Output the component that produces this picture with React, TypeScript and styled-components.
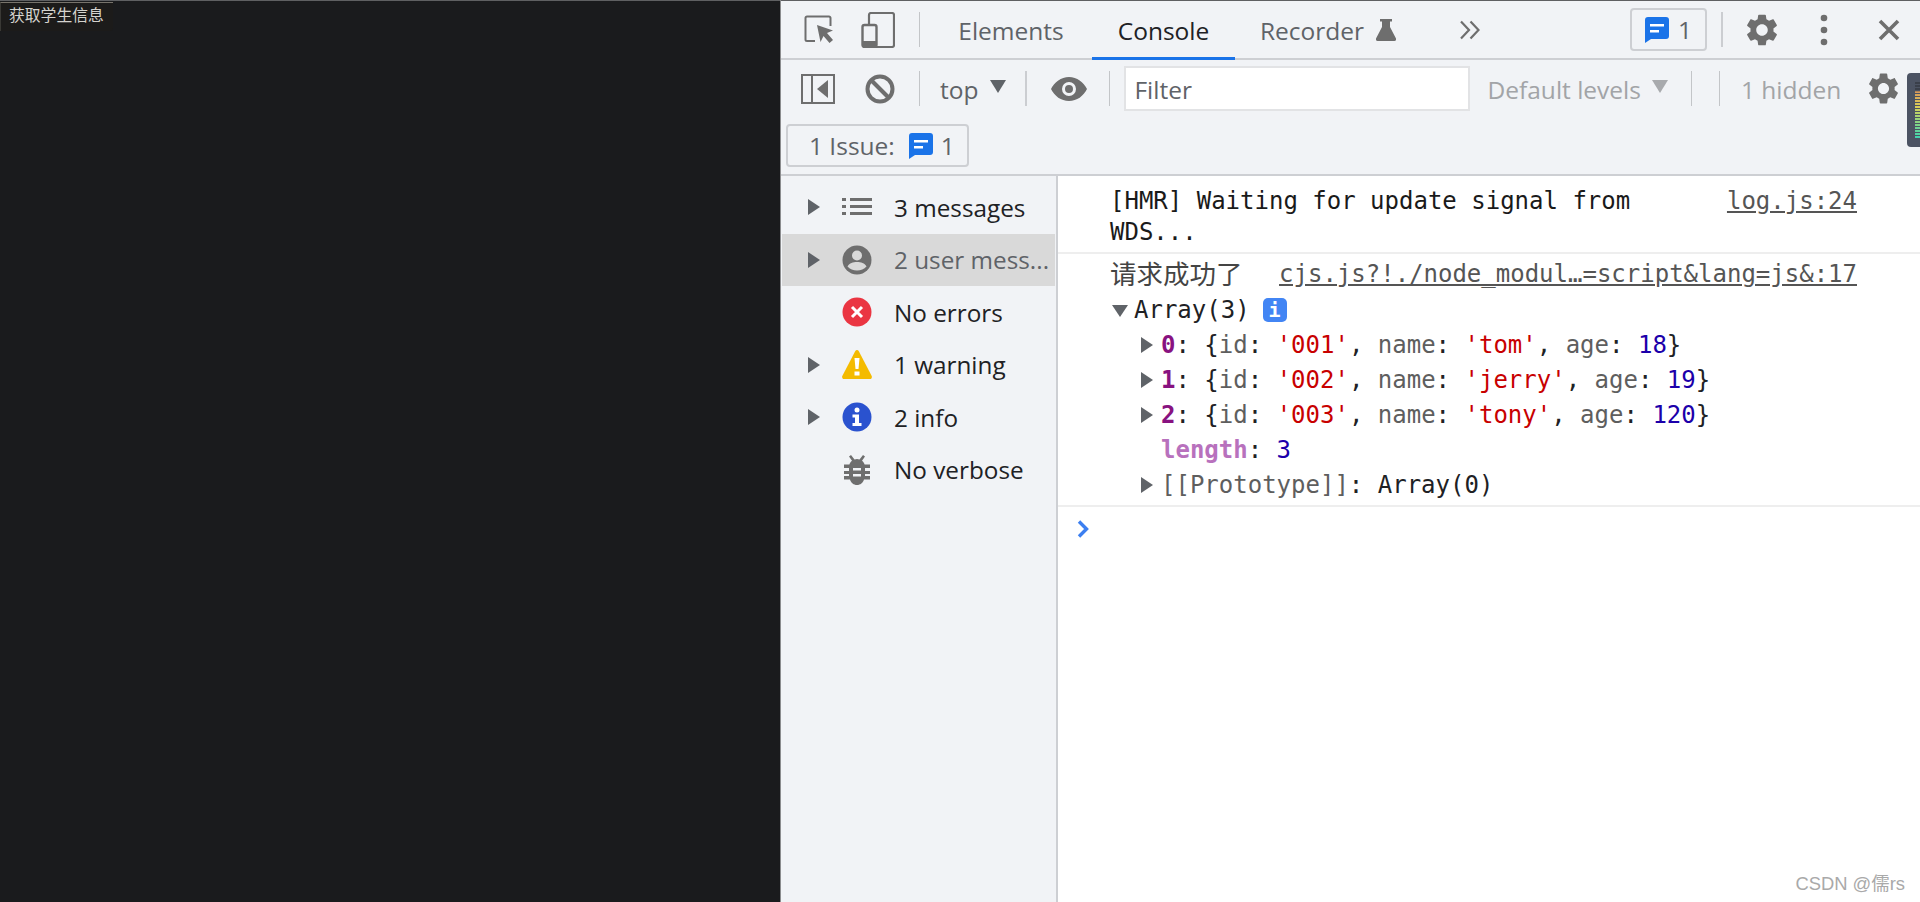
import React from 'react';
import styled, { createGlobalStyle } from 'styled-components';

const GlobalStyle = createGlobalStyle`
    html, body {
        margin: 0;
        padding: 0;
        background: #fff;
    }
    * {
        box-sizing: border-box;
    }
`;

const UI_FONT = `"Open Sans", "Noto Sans", sans-serif`;
const MONO_FONT = `"DejaVu Sans Mono", "Liberation Mono", "Noto Sans CJK SC", monospace`;

const Page = styled.div`
    position: relative;
    display: flex;
    width: 1920px;
    height: 902px;
    overflow: hidden;
`;

const AppPane = styled.div`
    width: 780px;
    flex-shrink: 0;
    background: #1a1b1d;
    border-top: 1px solid #5f6062;
`;

const FetchButton = styled.button`
    display: block;
    width: 113px;
    height: 29px;
    margin-top: 1px;
    padding: 0 0 6px 8px;
    border: none;
    border-top: 1px solid #77736b;
    border-left: 1px solid #3a3935;
    border-radius: 0 0 3px 0;
    background: #1c1b1a;
    color: #d5d3ce;
    font-family: "Noto Sans CJK SC", sans-serif;
    font-size: 15.8px;
    text-align: left;
`;

const DevTools = styled.div`
    flex: 1;
    display: flex;
    flex-direction: column;
    background: #f1f3f6;
    border-left: 1px solid #8b8c8e;
    font-family: ${UI_FONT};
`;

const TabBar = styled.div`
    display: flex;
    align-items: center;
    height: 60px;
    flex-shrink: 0;
    border-top: 1px solid #5f6062;
    border-bottom: 2px solid #cdcfd3;
`;

const Slot = styled.div<{ $x: number; $w: number }>`
    display: flex;
    align-items: center;
    justify-content: center;
    flex-shrink: 0;
    width: ${p => p.$w}px;
    margin-left: ${p => p.$x}px;
`;

const Divider = styled.div<{ $x: number; $light?: boolean }>`
    flex-shrink: 0;
    width: ${p => (p.$light ? 1 : 2)}px;
    height: 35px;
    margin-left: ${p => p.$x}px;
    background: ${p => (p.$light ? '#c3c5c8' : '#cbcdd1')};
`;

const Tab = styled.div<{ $x: number; $w: number; $active?: boolean }>`
    display: flex;
    align-items: center;
    justify-content: center;
    flex-shrink: 0;
    align-self: stretch;
    width: ${p => p.$w}px;
    margin-left: ${p => p.$x}px;
    margin-bottom: -2px;
    padding-top: 2px;
    border-bottom: 3px solid ${p => (p.$active ? '#1a73e8' : 'transparent')};
    color: ${p => (p.$active ? '#202124' : '#5f6368')};
    font-size: 24.5px;
    white-space: nowrap;
`;

const IssueCount = styled.div<{ $x: number }>`
    display: flex;
    align-items: center;
    justify-content: center;
    gap: 9px;
    flex-shrink: 0;
    width: 77px;
    height: 43px;
    margin-left: ${p => p.$x}px;
    border: 2px solid #cdcfd3;
    border-radius: 4px;
    color: #5f6368;
    font-size: 24.5px;
`;

const ConsoleBars = styled.div`
    position: relative;
    flex-shrink: 0;
    height: 116px;
    border-bottom: 2px solid #cdcfd3;
`;

const ToolRow = styled.div`
    display: flex;
    align-items: center;
    height: 54px;
    padding-top: 3px;
`;

const ContextLabel = styled.div<{ $x: number; $muted?: boolean }>`
    flex-shrink: 0;
    margin-left: ${p => p.$x}px;
    padding-top: 2px;
    color: ${p => (p.$muted ? '#a2a4a7' : '#5f6368')};
    font-size: 24.5px;
    white-space: nowrap;
`;

const Caret = styled.div<{ $x: number; $muted?: boolean }>`
    flex-shrink: 0;
    width: 0;
    height: 0;
    margin-left: ${p => p.$x}px;
    margin-bottom: 4px;
    border-left: 8px solid transparent;
    border-right: 8px solid transparent;
    border-top: 13px solid ${p => (p.$muted ? '#a8aaad' : '#5f6368')};
`;

const FilterBox = styled.div<{ $x: number }>`
    display: flex;
    align-items: center;
    flex-shrink: 0;
    width: 346px;
    height: 45px;
    margin-left: ${p => p.$x}px;
    padding: 2px 0 0 8px;
    background: #fff;
    border: 2px solid #e2e3e5;
    color: #5f6368;
    font-size: 24.5px;
`;

const LevelMeter = styled.div`
    position: absolute;
    top: 13px;
    left: 1126px;
    width: 20px;
    height: 74px;
    padding: 9px 0 0 8px;
    border-radius: 4px 0 0 4px;
    background: #4c5363;
`;

const MeterBars = styled.div`
    width: 5px;
    height: 56px;
    background:
        repeating-linear-gradient(to bottom, transparent 0 2px, #4c5363 2px 3px),
        linear-gradient(to bottom, #3a3f4a 0 14%, #d99a5a 18%, #d8cf57 45%, #8fd47f 70%, #3fd4b0 100%);
`;

const IssueRow = styled.div`
    padding: 10px 0 0 5px;
`;

const IssueButton = styled.div`
    display: flex;
    align-items: center;
    width: 183px;
    height: 43px;
    padding-left: 21px;
    border: 2px solid #cdcfd3;
    border-radius: 4px;
    color: #5f6368;
    font-size: 24.5px;
`;

const IssueCountText = styled.span`
    margin-left: 8px;
`;

const Body = styled.div`
    flex: 1;
    display: flex;
    min-height: 0;
`;

const Sidebar = styled.div`
    width: 277px;
    flex-shrink: 0;
    padding: 5px 0 0 1px;
    border-right: 2px solid #cdcfd3;
`;

const SideItem = styled.div<{ $selected?: boolean }>`
    display: flex;
    align-items: center;
    width: 273px;
    height: 52.5px;
    background: ${p => (p.$selected ? '#d9d9d9' : 'transparent')};
    color: ${p => (p.$selected ? '#5f6368' : '#202124')};
    font-size: 24.3px;
    white-space: nowrap;
`;

const SideArrow = styled.div<{ $hidden?: boolean }>`
    flex-shrink: 0;
    width: 0;
    height: 0;
    margin-left: 26px;
    border-top: 8px solid transparent;
    border-bottom: 8px solid transparent;
    border-left: 12px solid ${p => (p.$hidden ? 'transparent' : '#5f6368')};
`;

const SideIcon = styled.div`
    display: flex;
    flex-shrink: 0;
    width: 30px;
    margin-left: 22px;
    margin-right: 22px;
`;

const Main = styled.div`
    flex: 1;
    background: #fff;
    font-family: ${MONO_FONT};
    font-size: 24px;
    color: #202124;
`;

const LogLine = styled.div<{ $height: number }>`
    display: flex;
    justify-content: space-between;
    height: ${p => p.$height}px;
    padding: 10px 63px 0 52px;
    border-bottom: 2px solid #eeeeee;
`;

const LogText = styled.div<{ $width?: number; $muted?: boolean }>`
    width: ${p => (p.$width ? `${p.$width}px` : 'auto')};
    color: ${p => (p.$muted ? '#444' : '#1a1a1a')};
    line-height: 31px;
`;

const CjkText = styled.span`
    font-size: 26.5px;
`;

const SourceLink = styled.a`
    color: #555;
    text-decoration: underline;
    line-height: 31px;
    white-space: nowrap;
`;

const LogGroup = styled.div`
    height: 253px;
    padding: 5px 63px 0 52px;
    border-bottom: 2px solid #eeeeee;
`;

const GroupHeader = styled.div`
    display: flex;
    justify-content: space-between;
    height: 33px;
    line-height: 33px;
`;

const TreeRow = styled.div<{ $indent: number }>`
    display: flex;
    align-items: center;
    height: 35px;
    padding-left: ${p => p.$indent}px;
    white-space: pre;
`;

const DownArrow = styled.div`
    width: 0;
    height: 0;
    margin: 2px 6px 0 1px;
    border-left: 8px solid transparent;
    border-right: 8px solid transparent;
    border-top: 12px solid #5f6368;
`;

const RightArrow = styled.div`
    flex-shrink: 0;
    width: 0;
    height: 0;
    margin-right: 8px;
    border-top: 8px solid transparent;
    border-bottom: 8px solid transparent;
    border-left: 12px solid #5f6368;
`;

const InfoBadge = styled.span`
    display: flex;
    align-items: center;
    justify-content: center;
    width: 24px;
    height: 24px;
    margin-left: 13px;
    border-radius: 5px;
    background: #4285f4;
    color: #fff;
    font-size: 20px;
    font-weight: bold;
`;

const Key = styled.span<{ $light?: boolean }>`
    color: ${p => (p.$light ? '#b871bd' : '#881280')};
    font-weight: bold;
`;
const Str = styled.span`
    color: #c80000;
`;
const Num = styled.span`
    color: #1c00aa;
`;
const Dim = styled.span`
    color: #5e5e5e;
`;

const PromptRow = styled.div`
    padding: 9px 0 0 19px;
`;

const Watermark = styled.div`
    position: absolute;
    right: 15px;
    bottom: 7px;
    color: #a9a9a9;
    font-family: "Liberation Sans", "Noto Sans CJK SC", sans-serif;
    font-size: 18.4px;
`;

const GEAR =
    'M19.14 12.94c.04-.3.06-.61.06-.94 0-.32-.02-.64-.07-.94l2.03-1.58c.18-.14.23-.41.12-.61l-1.92-3.32c-.12-.22-.37-.29-.59-.22l-2.39.96c-.5-.38-1.03-.7-1.62-.94l-.36-2.54c-.04-.24-.24-.41-.48-.41h-3.84c-.24 0-.43.17-.47.41l-.36 2.54c-.59.24-1.13.57-1.62.94l-2.39-.96c-.22-.08-.47 0-.59.22L2.74 8.87c-.12.21-.08.47.12.61l2.03 1.58c-.05.3-.09.63-.09.94s.02.64.07.94l-2.03 1.58c-.18.14-.23.41-.12.61l1.92 3.32c.12.22.37.29.59.22l2.39-.96c.5.38 1.03.7 1.62.94l.36 2.54c.05.24.24.41.48.41h3.84c.24 0 .44-.17.47-.41l.36-2.54c.59-.24 1.13-.56 1.62-.94l2.39.96c.22.08.47 0 .59-.22l1.92-3.32c.12-.22.07-.47-.12-.61l-2.01-1.58zM12 15.6c-1.98 0-3.6-1.62-3.6-3.6s1.62-3.6 3.6-3.6 3.6 1.62 3.6 3.6-1.62 3.6-3.6 3.6z';

const ICON_GREY = '#6e6e6e';

const InspectIcon = () => (
    <svg width="30" height="30" viewBox="0 0 30 30">
        <path d="M11 26H3a1.5 1.5 0 0 1-1.5-1.5V3A1.5 1.5 0 0 1 3 1.500h22A1.500 1.500 0 0 1 26.500 3v8" fill="none" stroke={ICON_GREY} strokeWidth="2" />
        <path d="M13 10l16 5.500-6 2.500 6 7-3.500 3-6-7-3 6z" fill={ICON_GREY} />
    </svg>
);

const DeviceIcon = () => (
    <svg width="34" height="36" viewBox="0 0 34 36">
        <path d="M8 13V3a2 2 0 0 1 2-2h21a2 2 0 0 1 2 2v30a2 2 0 0 1-2 2H15" fill="none" stroke={ICON_GREY} strokeWidth="2.200" />
        <rect x="1.500" y="13" width="14" height="22" rx="2" fill="none" stroke={ICON_GREY} strokeWidth="2.400" />
        <rect x="1.500" y="29" width="14" height="6" fill={ICON_GREY} />
    </svg>
);

const FlaskIcon = () => (
    <svg width="20" height="22" viewBox="0 0 20 22">
        <path d="M4 0h12v2.500h-2V8l6 11.500A1.800 1.800 0 0 1 18.500 22h-17A1.800 1.800 0 0 1 0 19.500L6 8V2.500H4z" fill={ICON_GREY} />
    </svg>
);

const ChevronsIcon = () => (
    <svg width="20" height="20" viewBox="0 0 20 20">
        <path d="M1 1.500L9 10l-8 8.500M10.500 1.500L18.500 10l-8 8.500" fill="none" stroke={ICON_GREY} strokeWidth="2.200" />
    </svg>
);

const MessageIcon = () => (
    <svg width="24" height="26" viewBox="0 0 24 26">
        <path d="M3 0h18a3 3 0 0 1 3 3v16a3 3 0 0 1-3 3H6l-6 4V3a3 3 0 0 1 3-3z" fill="#1a73e8" />
        <rect x="5" y="7" width="14" height="2.500" fill="#fff" />
        <rect x="5" y="13" width="9" height="2.500" fill="#fff" />
    </svg>
);

const GearIcon = ({ size }: { size: number }) => (
    <svg width={size} height={size} viewBox="2 2 20 20">
        <path d={GEAR} fill={ICON_GREY} />
    </svg>
);

const DotsIcon = () => (
    <svg width="8" height="32" viewBox="0 0 8 32">
        <circle cx="4" cy="4" r="3.300" fill={ICON_GREY} />
        <circle cx="4" cy="16" r="3.300" fill={ICON_GREY} />
        <circle cx="4" cy="28" r="3.300" fill={ICON_GREY} />
    </svg>
);

const CloseIcon = () => (
    <svg width="22" height="22" viewBox="0 0 22 22">
        <path d="M2 2l18 18M20 2L2 20" stroke={ICON_GREY} strokeWidth="3.600" />
    </svg>
);

const PanelIcon = () => (
    <svg width="34" height="30" viewBox="0 0 34 30">
        <rect x="1" y="1" width="32" height="28" fill="none" stroke={ICON_GREY} strokeWidth="2" />
        <path d="M11 1v28" stroke={ICON_GREY} strokeWidth="2" />
        <path d="M27 6v18L16 15z" fill={ICON_GREY} />
    </svg>
);

const BlockIcon = () => (
    <svg width="30" height="30" viewBox="0 0 30 30">
        <circle cx="15" cy="15" r="12.500" fill="none" stroke={ICON_GREY} strokeWidth="4" />
        <path d="M6 6l18 18" stroke={ICON_GREY} strokeWidth="4" />
    </svg>
);

const EyeIcon = () => (
    <svg width="36" height="24" viewBox="0 0 36 24">
        <path d="M18 0C10 0 3.500 5 0 12c3.500 7 10 12 18 12s14.500-5 18-12C32.500 5 26 0 18 0zm0 19a7 7 0 1 1 0-14 7 7 0 0 1 0 14zm0-11a4 4 0 1 0 0 8 4 4 0 0 0 0-8z" fill={ICON_GREY} />
    </svg>
);

const ListIcon = () => (
    <svg width="30" height="18" viewBox="0 0 30 18">
        <path d="M0 0h4v3H0zM8 0h22v3H8zM0 7h4v3H0zM8 7h22v3H8zM0 14h4v3H0zM8 14h22v3H8z" fill={ICON_GREY} />
    </svg>
);

const UserIcon = () => (
    <svg width="30" height="30" viewBox="0 0 30 30">
        <circle cx="15" cy="15" r="14.500" fill={ICON_GREY} />
        <circle cx="15" cy="10.500" r="5" fill="#d9d9d9" />
        <path d="M5.500 21.500c2-3.500 5.500-4.500 9.500-4.500s7.500 1 9.500 4.500c-2.300 2.700-5.700 4-9.500 4s-7.200-1.300-9.500-4z" fill="#d9d9d9" />
    </svg>
);

const ErrorIcon = () => (
    <svg width="30" height="30" viewBox="0 0 30 30">
        <circle cx="15" cy="15" r="14.500" fill="#ea3542" />
        <path d="M10 10l10 10M20 10L10 20" stroke="#fff" strokeWidth="3" />
    </svg>
);

const WarningIcon = () => (
    <svg width="30" height="30" viewBox="0 0 30 30">
        <path d="M15 0c.8 0 1.300.4 1.700 1.100L29.700 26c.6 1.300-.2 3-1.700 3H2c-1.500 0-2.300-1.700-1.700-3L13.300 1.100C13.700.4 14.200 0 15 0z" fill="#f4bb00" />
        <path d="M12.500 8h5l-1 11h-3z" fill="#fff" />
        <rect x="12.500" y="21.500" width="5" height="4" fill="#fff" />
    </svg>
);

const InfoIcon = () => (
    <svg width="30" height="30" viewBox="0 0 30 30">
        <circle cx="15" cy="15" r="14.500" fill="#2a52cf" />
        <circle cx="15" cy="8" r="2.500" fill="#fff" />
        <path d="M10.500 12.500H17V21h2.500v3h-9v-3H13v-5.500h-2.500z" fill="#fff" />
    </svg>
);

const BugIcon = () => (
    <svg width="30" height="30" viewBox="0 0 30 30">
        <path d="M9 0l3.500 4.500C13.500 4.200 14.200 4 15 4s1.500.2 2.500.5L21 0l2 1.500-3 4.200c1.300 1 2.200 2.300 2.600 3.800h5.400v3.500h-5v3h5V19h-5v2h5v3.500h-6C21 27.800 18.300 30 15 30s-6-2.200-7-5.500H2V21h5v-2H2v-3h5v-3H2V9.500h5.400C7.800 8 8.700 6.700 10 5.700L7 1.500z" fill={ICON_GREY} />
        <rect x="11" y="13" width="8" height="2.500" fill="#f1f3f6" />
        <rect x="11" y="19" width="8" height="2.500" fill="#f1f3f6" />
    </svg>
);

const PromptIcon = () => (
    <svg width="12" height="18" viewBox="0 0 12 18">
        <path d="M2 1.500L9.500 9 2 16.500" fill="none" stroke="#3c7ff0" strokeWidth="3.400" />
    </svg>
);

const sideItems = [
    { icon: <ListIcon />, label: '3 messages' },
    { icon: <UserIcon />, label: '2 user mess...', selected: true },
    { icon: <ErrorIcon />, label: 'No errors', noArrow: true },
    { icon: <WarningIcon />, label: '1 warning' },
    { icon: <InfoIcon />, label: '2 info' },
    { icon: <BugIcon />, label: 'No verbose', noArrow: true },
];

const students = [
    { id: '001', name: 'tom', age: 18 },
    { id: '002', name: 'jerry', age: 19 },
    { id: '003', name: 'tony', age: 120 },
];

const App: React.FC = () => {
    return (
        <Page>
            <GlobalStyle />
            <AppPane>
                <FetchButton>获取学生信息</FetchButton>
            </AppPane>
            <DevTools>
                <TabBar>
                    <Slot $x={23} $w={30}><InspectIcon /></Slot>
                    <Slot $x={27} $w={34}><DeviceIcon /></Slot>
                    <Divider $x={24} $light />
                    <Tab $x={31} $w={120}>Elements</Tab>
                    <Tab $x={21} $w={143} $active>Console</Tab>
                    <Tab $x={25} $w={104}>Recorder</Tab>
                    <Slot $x={12} $w={20}><FlaskIcon /></Slot>
                    <Slot $x={64} $w={20}><ChevronsIcon /></Slot>
                    <IssueCount $x={150}><MessageIcon />1</IssueCount>
                    <Divider $x={14} />
                    <Slot $x={23} $w={32}><GearIcon size={32} /></Slot>
                    <Slot $x={42} $w={8}><DotsIcon /></Slot>
                    <Slot $x={50} $w={22}><CloseIcon /></Slot>
                </TabBar>
                <ConsoleBars>
                    <ToolRow>
                        <Slot $x={20} $w={34}><PanelIcon /></Slot>
                        <Slot $x={30} $w={30}><BlockIcon /></Slot>
                        <Divider $x={24} $light />
                        <ContextLabel $x={20}>top</ContextLabel>
                        <Caret $x={12} />
                        <Divider $x={19} />
                        <Slot $x={24} $w={36}><EyeIcon /></Slot>
                        <Divider $x={22} $light />
                        <FilterBox $x={14}>Filter</FilterBox>
                        <ContextLabel $x={17} $muted>Default levels</ContextLabel>
                        <Caret $x={11} $muted />
                        <Divider $x={23} $light />
                        <Divider $x={27} $light />
                        <ContextLabel $x={21} $muted>1 hidden</ContextLabel>
                        <Slot $x={27} $w={31}><GearIcon size={31} /></Slot>
                    </ToolRow>
                    <IssueRow>
                        <IssueButton>
                            1 Issue:
                            <Slot $x={14} $w={24}><MessageIcon /></Slot>
                            <IssueCountText>1</IssueCountText>
                        </IssueButton>
                    </IssueRow>
                    <LevelMeter><MeterBars /></LevelMeter>
                </ConsoleBars>
                <Body>
                    <Sidebar>
                        {sideItems.map(item => (
                            <SideItem key={item.label} $selected={item.selected}>
                                <SideArrow $hidden={item.noArrow} />
                                <SideIcon>{item.icon}</SideIcon>
                                {item.label}
                            </SideItem>
                        ))}
                    </Sidebar>
                    <Main>
                        <LogLine $height={78}>
                            <LogText $width={540}>[HMR] Waiting for update signal from WDS...</LogText>
                            <SourceLink>log.js:24</SourceLink>
                        </LogLine>
                        <LogGroup>
                            <GroupHeader>
                                <LogText $muted><CjkText>请求成功了</CjkText></LogText>
                                <SourceLink>cjs.js?!./node_modul…=script&amp;lang=js&amp;:17</SourceLink>
                            </GroupHeader>
                            <TreeRow $indent={1}>
                                <DownArrow />Array(3)<InfoBadge>i</InfoBadge>
                            </TreeRow>
                            {students.map((s, i) => (
                                <TreeRow $indent={31} key={s.id}>
                                    <RightArrow />
                                    <Key>{i}</Key>: {'{'}<Dim>id</Dim>: <Str>'{s.id}'</Str>, <Dim>name</Dim>: <Str>'{s.name}'</Str>, <Dim>age</Dim>: <Num>{s.age}</Num>{'}'}
                                </TreeRow>
                            ))}
                            <TreeRow $indent={51}>
                                <Key $light>length</Key>: <Num>3</Num>
                            </TreeRow>
                            <TreeRow $indent={31}>
                                <RightArrow />
                                <Dim>[[Prototype]]</Dim>: Array(0)
                            </TreeRow>
                        </LogGroup>
                        <PromptRow><PromptIcon /></PromptRow>
                    </Main>
                </Body>
            </DevTools>
            <Watermark>CSDN @儒rs</Watermark>
        </Page>
    );
};

export default App;
